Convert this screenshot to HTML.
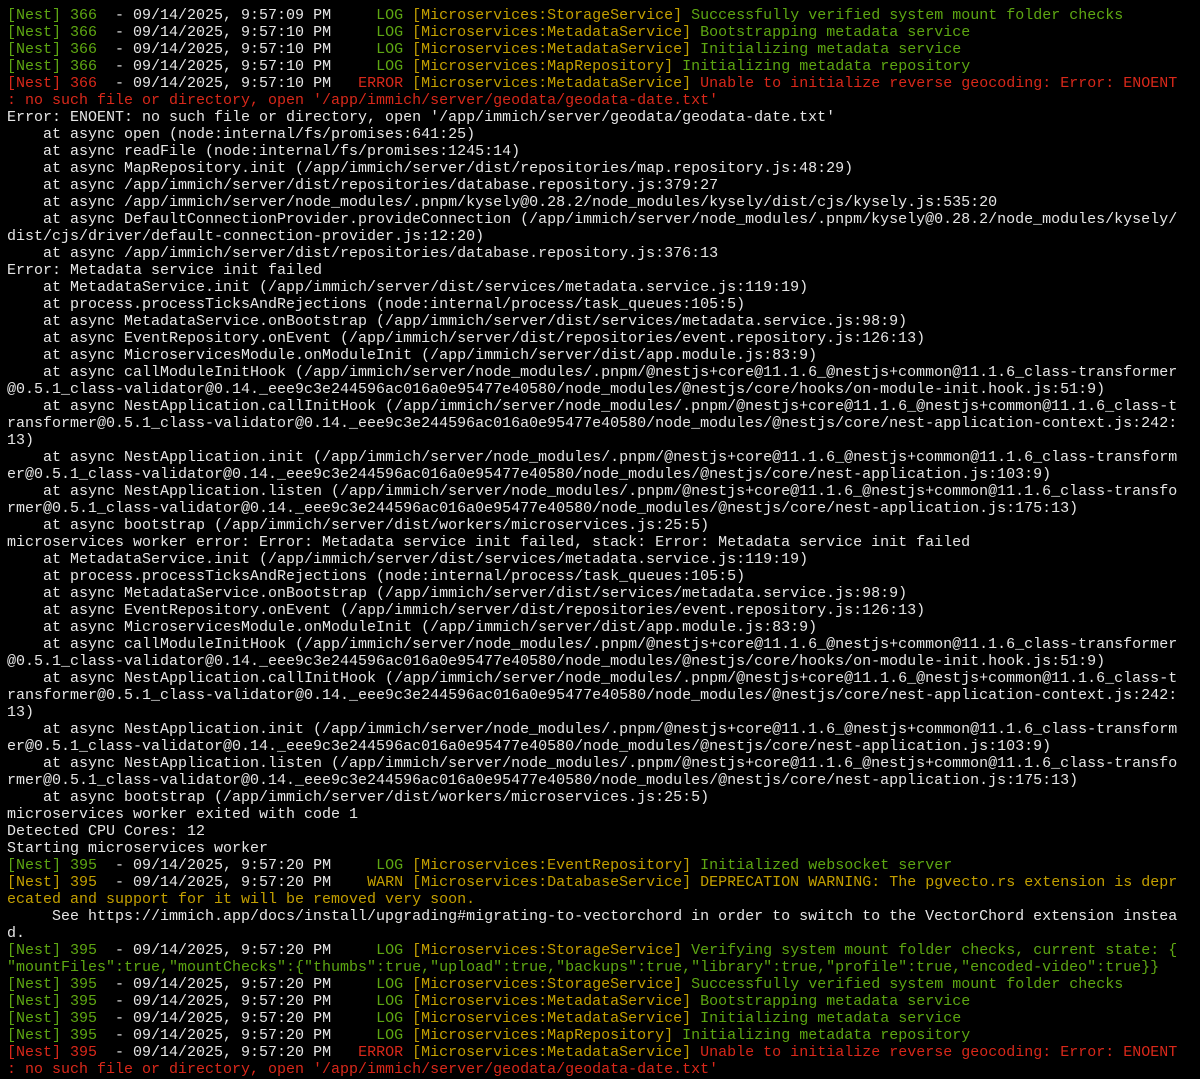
<!DOCTYPE html>
<html><head><meta charset="utf-8"><style>
html,body{margin:0;padding:0;background:#000;width:1200px;height:1079px;overflow:hidden}
pre{margin:0;padding:7px 0 0 7px;font-family:"Liberation Mono",monospace;font-size:15px;line-height:17px;color:#e6e6e6;white-space:pre;}
.g{color:#5ea712}.y{color:#c4a000}.r{color:#d9281a}.w{color:#e6e6e6}
</style></head><body><pre><span class="g">[Nest] 366  </span>- 09/14/2025, 9:57:09 PM<span class="g">     LOG</span> <span class="y">[Microservices:StorageService]</span> <span class="g">Successfully verified system mount folder checks</span>
<span class="g">[Nest] 366  </span>- 09/14/2025, 9:57:10 PM<span class="g">     LOG</span> <span class="y">[Microservices:MetadataService]</span> <span class="g">Bootstrapping metadata service</span>
<span class="g">[Nest] 366  </span>- 09/14/2025, 9:57:10 PM<span class="g">     LOG</span> <span class="y">[Microservices:MetadataService]</span> <span class="g">Initializing metadata service</span>
<span class="g">[Nest] 366  </span>- 09/14/2025, 9:57:10 PM<span class="g">     LOG</span> <span class="y">[Microservices:MapRepository]</span> <span class="g">Initializing metadata repository</span>
<span class="r">[Nest] 366  </span>- 09/14/2025, 9:57:10 PM<span class="r">   ERROR</span> <span class="y">[Microservices:MetadataService]</span> <span class="r">Unable to initialize reverse geocoding: Error: ENOENT</span>
<span class="r">: no such file or directory, open '/app/immich/server/geodata/geodata-date.txt'</span>
Error: ENOENT: no such file or directory, open '/app/immich/server/geodata/geodata-date.txt'
    at async open (node:internal/fs/promises:641:25)
    at async readFile (node:internal/fs/promises:1245:14)
    at async MapRepository.init (/app/immich/server/dist/repositories/map.repository.js:48:29)
    at async /app/immich/server/dist/repositories/database.repository.js:379:27
    at async /app/immich/server/node_modules/.pnpm/kysely@0.28.2/node_modules/kysely/dist/cjs/kysely.js:535:20
    at async DefaultConnectionProvider.provideConnection (/app/immich/server/node_modules/.pnpm/kysely@0.28.2/node_modules/kysely/
dist/cjs/driver/default-connection-provider.js:12:20)
    at async /app/immich/server/dist/repositories/database.repository.js:376:13
Error: Metadata service init failed
    at MetadataService.init (/app/immich/server/dist/services/metadata.service.js:119:19)
    at process.processTicksAndRejections (node:internal/process/task_queues:105:5)
    at async MetadataService.onBootstrap (/app/immich/server/dist/services/metadata.service.js:98:9)
    at async EventRepository.onEvent (/app/immich/server/dist/repositories/event.repository.js:126:13)
    at async MicroservicesModule.onModuleInit (/app/immich/server/dist/app.module.js:83:9)
    at async callModuleInitHook (/app/immich/server/node_modules/.pnpm/@nestjs+core@11.1.6_@nestjs+common@11.1.6_class-transformer
@0.5.1_class-validator@0.14._eee9c3e244596ac016a0e95477e40580/node_modules/@nestjs/core/hooks/on-module-init.hook.js:51:9)
    at async NestApplication.callInitHook (/app/immich/server/node_modules/.pnpm/@nestjs+core@11.1.6_@nestjs+common@11.1.6_class-t
ransformer@0.5.1_class-validator@0.14._eee9c3e244596ac016a0e95477e40580/node_modules/@nestjs/core/nest-application-context.js:242:
13)
    at async NestApplication.init (/app/immich/server/node_modules/.pnpm/@nestjs+core@11.1.6_@nestjs+common@11.1.6_class-transform
er@0.5.1_class-validator@0.14._eee9c3e244596ac016a0e95477e40580/node_modules/@nestjs/core/nest-application.js:103:9)
    at async NestApplication.listen (/app/immich/server/node_modules/.pnpm/@nestjs+core@11.1.6_@nestjs+common@11.1.6_class-transfo
rmer@0.5.1_class-validator@0.14._eee9c3e244596ac016a0e95477e40580/node_modules/@nestjs/core/nest-application.js:175:13)
    at async bootstrap (/app/immich/server/dist/workers/microservices.js:25:5)
microservices worker error: Error: Metadata service init failed, stack: Error: Metadata service init failed
    at MetadataService.init (/app/immich/server/dist/services/metadata.service.js:119:19)
    at process.processTicksAndRejections (node:internal/process/task_queues:105:5)
    at async MetadataService.onBootstrap (/app/immich/server/dist/services/metadata.service.js:98:9)
    at async EventRepository.onEvent (/app/immich/server/dist/repositories/event.repository.js:126:13)
    at async MicroservicesModule.onModuleInit (/app/immich/server/dist/app.module.js:83:9)
    at async callModuleInitHook (/app/immich/server/node_modules/.pnpm/@nestjs+core@11.1.6_@nestjs+common@11.1.6_class-transformer
@0.5.1_class-validator@0.14._eee9c3e244596ac016a0e95477e40580/node_modules/@nestjs/core/hooks/on-module-init.hook.js:51:9)
    at async NestApplication.callInitHook (/app/immich/server/node_modules/.pnpm/@nestjs+core@11.1.6_@nestjs+common@11.1.6_class-t
ransformer@0.5.1_class-validator@0.14._eee9c3e244596ac016a0e95477e40580/node_modules/@nestjs/core/nest-application-context.js:242:
13)
    at async NestApplication.init (/app/immich/server/node_modules/.pnpm/@nestjs+core@11.1.6_@nestjs+common@11.1.6_class-transform
er@0.5.1_class-validator@0.14._eee9c3e244596ac016a0e95477e40580/node_modules/@nestjs/core/nest-application.js:103:9)
    at async NestApplication.listen (/app/immich/server/node_modules/.pnpm/@nestjs+core@11.1.6_@nestjs+common@11.1.6_class-transfo
rmer@0.5.1_class-validator@0.14._eee9c3e244596ac016a0e95477e40580/node_modules/@nestjs/core/nest-application.js:175:13)
    at async bootstrap (/app/immich/server/dist/workers/microservices.js:25:5)
microservices worker exited with code 1
Detected CPU Cores: 12
Starting microservices worker
<span class="g">[Nest] 395  </span>- 09/14/2025, 9:57:20 PM<span class="g">     LOG</span> <span class="y">[Microservices:EventRepository]</span> <span class="g">Initialized websocket server</span>
<span class="y">[Nest] 395  </span>- 09/14/2025, 9:57:20 PM<span class="y">    WARN</span> <span class="y">[Microservices:DatabaseService]</span> <span class="y">DEPRECATION WARNING: The pgvecto.rs extension is depr</span>
<span class="y">ecated and support for it will be removed very soon.</span>
     See https://immich.app/docs/install/upgrading#migrating-to-vectorchord in order to switch to the VectorChord extension instea
d.
<span class="g">[Nest] 395  </span>- 09/14/2025, 9:57:20 PM<span class="g">     LOG</span> <span class="y">[Microservices:StorageService]</span> <span class="g">Verifying system mount folder checks, current state: {</span>
<span class="g">"mountFiles":true,"mountChecks":{"thumbs":true,"upload":true,"backups":true,"library":true,"profile":true,"encoded-video":true}}</span>
<span class="g">[Nest] 395  </span>- 09/14/2025, 9:57:20 PM<span class="g">     LOG</span> <span class="y">[Microservices:StorageService]</span> <span class="g">Successfully verified system mount folder checks</span>
<span class="g">[Nest] 395  </span>- 09/14/2025, 9:57:20 PM<span class="g">     LOG</span> <span class="y">[Microservices:MetadataService]</span> <span class="g">Bootstrapping metadata service</span>
<span class="g">[Nest] 395  </span>- 09/14/2025, 9:57:20 PM<span class="g">     LOG</span> <span class="y">[Microservices:MetadataService]</span> <span class="g">Initializing metadata service</span>
<span class="g">[Nest] 395  </span>- 09/14/2025, 9:57:20 PM<span class="g">     LOG</span> <span class="y">[Microservices:MapRepository]</span> <span class="g">Initializing metadata repository</span>
<span class="r">[Nest] 395  </span>- 09/14/2025, 9:57:20 PM<span class="r">   ERROR</span> <span class="y">[Microservices:MetadataService]</span> <span class="r">Unable to initialize reverse geocoding: Error: ENOENT</span>
<span class="r">: no such file or directory, open '/app/immich/server/geodata/geodata-date.txt'</span></pre></body></html>
